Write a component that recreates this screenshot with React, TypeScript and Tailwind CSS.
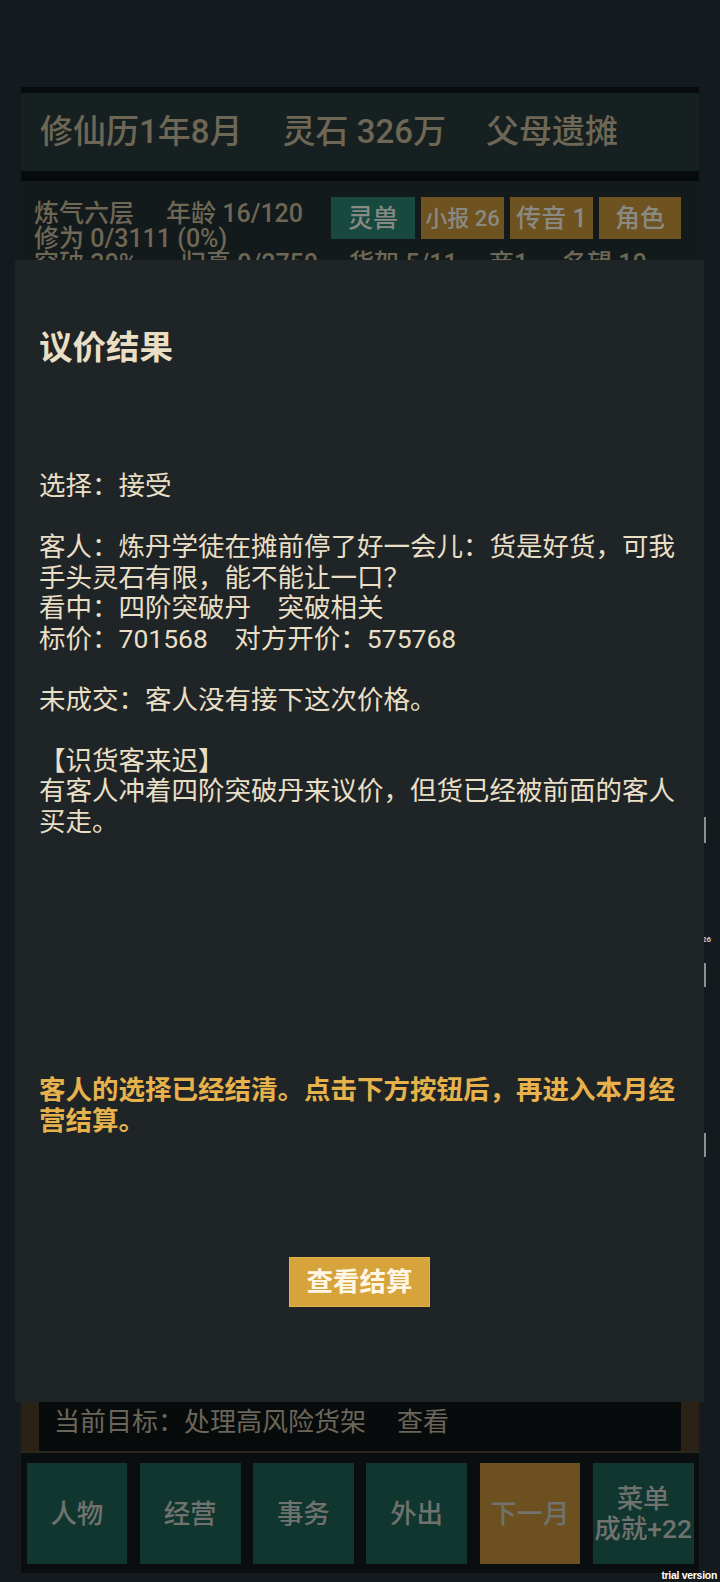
const FONT = "font-[Roboto,'Noto_Sans_CJK_SC',sans-serif]";

const NAV = [
  { label: "人物", gold: false },
  { label: "经营", gold: false },
  { label: "事务", gold: false },
  { label: "外出", gold: false },
  { label: "下一月", gold: true },
];

const BODY = `选择：接受

客人：炼丹学徒在摊前停了好一会儿：货是好货，可我手头灵石有限，能不能让一口？
看中：四阶突破丹　突破相关
标价：701568　对方开价：575768

未成交：客人没有接下这次价格。

【识货客来迟】
有客人冲着四阶突破丹来议价，但货已经被前面的客人买走。`;

export default function App() {
  return (
    <div className={`relative flex h-[1582px] w-[720px] flex-col overflow-hidden bg-[#141a1d] ${FONT}`}>
      <div className="h-[87px] shrink-0" />

      {/* top status */}
      <div className="mx-[21px] shrink-0 bg-[#080b0d] pt-[6px] pb-[10px]">
        <div className="flex h-[78px] items-center gap-[40px] bg-[#172021] pl-[19px] text-[33px] font-medium text-[#6e6755]">
          <span>修仙历1年8月</span>
          <span>灵石 326万</span>
          <span>父母遗摊</span>
        </div>
      </div>

      {/* stats, mostly hidden behind the dialog */}
      <div className="mx-[21px] flex-1 bg-[#131a1c] pt-[16px] pl-[13px] text-[25px] leading-[25px] font-medium text-[#6e6755]">
        <div className="flex items-start">
          <div className="mt-[3.5px] w-[297px] shrink-0">
            <div>
              <span className="mr-[32px]">炼气六层</span>年龄 16/120
            </div>
            <div>修为 0/3111 (0%)</div>
          </div>
          <div className="flex gap-[6px] text-[#8a8a84]">
            <div className="flex h-[42px] w-[84px] items-center justify-center bg-[#17493f] text-[25px]">灵兽</div>
            <div className="flex h-[42px] w-[83px] items-center justify-center bg-[#6e5220] text-[22px]">小报 26</div>
            <div className="flex h-[42px] w-[83px] items-center justify-center bg-[#6e5220] text-[25px]">传音 1</div>
            <div className="flex h-[42px] w-[82px] items-center justify-center bg-[#6e5220] text-[25px]">角色</div>
          </div>
        </div>
        <div className="flex">
          <span className="w-[147px]">突破 30%</span>
          <span className="w-[168px]">归真 0/2750</span>
          <span className="w-[140px]">货架 5/11</span>
          <span className="w-[73px]">商1</span>
          <span>名望 10</span>
        </div>
      </div>

      {/* current goal */}
      <div className="mx-[21px] h-[51px] shrink-0 border-b-2 border-[#2b271d] bg-[#2a2216] px-[18px]">
        <div className="flex h-full items-center bg-[#080b0c] pb-[8px] pl-[15px] text-[26px] text-[#6b6659]">
          <span className="mr-[31px]">当前目标：处理高风险货架</span>
          <span>查看</span>
        </div>
      </div>

      {/* bottom nav */}
      <div className="mx-[21px] grid h-[120px] shrink-0 grid-cols-6 gap-[12.5px] bg-[#0a0e0f] px-[5.5px] pt-[10px] pb-[7px] text-[26.5px] font-medium text-[#6f726d]">
        {NAV.map((n) => (
          <div
            key={n.label}
            className={`flex h-[101px] items-center justify-center ${n.gold ? "bg-[#6d501f]" : "bg-[#11352f]"}`}
          >
            {n.label}
          </div>
        ))}
        <div className="flex h-[101px] flex-col items-center justify-center bg-[#11352f] leading-[30px]">
          <span>菜单</span>
          <span>成就+22</span>
        </div>
      </div>
      <div className="h-[9px] shrink-0" />

      {/* bits of the page showing at the right edge */}
      <div className="absolute top-[817px] left-[704px] h-[26px] w-[2px] bg-[#8c9090]" />
      <div className="absolute top-[936px] left-[702px] text-[8px] font-bold leading-none text-[#c9c9c9]">26</div>
      <div className="absolute top-[963px] left-[704px] h-[24px] w-[2px] bg-[#8c9090]" />
      <div className="absolute top-[1133px] left-[704px] h-[24px] w-[2px] bg-[#8c9090]" />

      {/* dialog */}
      <div className="absolute top-[260px] left-[15px] h-[1142px] w-[689px] bg-[#1f2526] px-[24px] pt-[68px]">
        <h2 className="text-[33.5px] leading-[40px] font-bold text-[#eadfc4]">议价结果</h2>
        <p className="mt-[103px] text-[26.5px] leading-[30.5px] whitespace-pre-wrap text-[#e9dfc6]">{BODY}</p>
        <p className="mt-[238px] text-[26.5px] leading-[30.5px] font-bold text-[#e7b24b]">
          客人的选择已经结清。点击下方按钮后，再进入本月经营结算。
        </p>
        <div className="mt-[121px] flex justify-center">
          <button
            type="button"
            className="flex h-[50px] w-[141px] items-center justify-center border border-[#e2b04a] bg-[#d7a43c] text-[26.5px] font-bold text-[#fff6e6]"
          >
            查看结算
          </button>
        </div>
      </div>

      <div className="absolute right-[3px] bottom-[2px] font-['Liberation_Sans',sans-serif] text-[10.5px] leading-none font-bold tracking-[-0.3px] text-white">
        trial version
      </div>
    </div>
  );
}
